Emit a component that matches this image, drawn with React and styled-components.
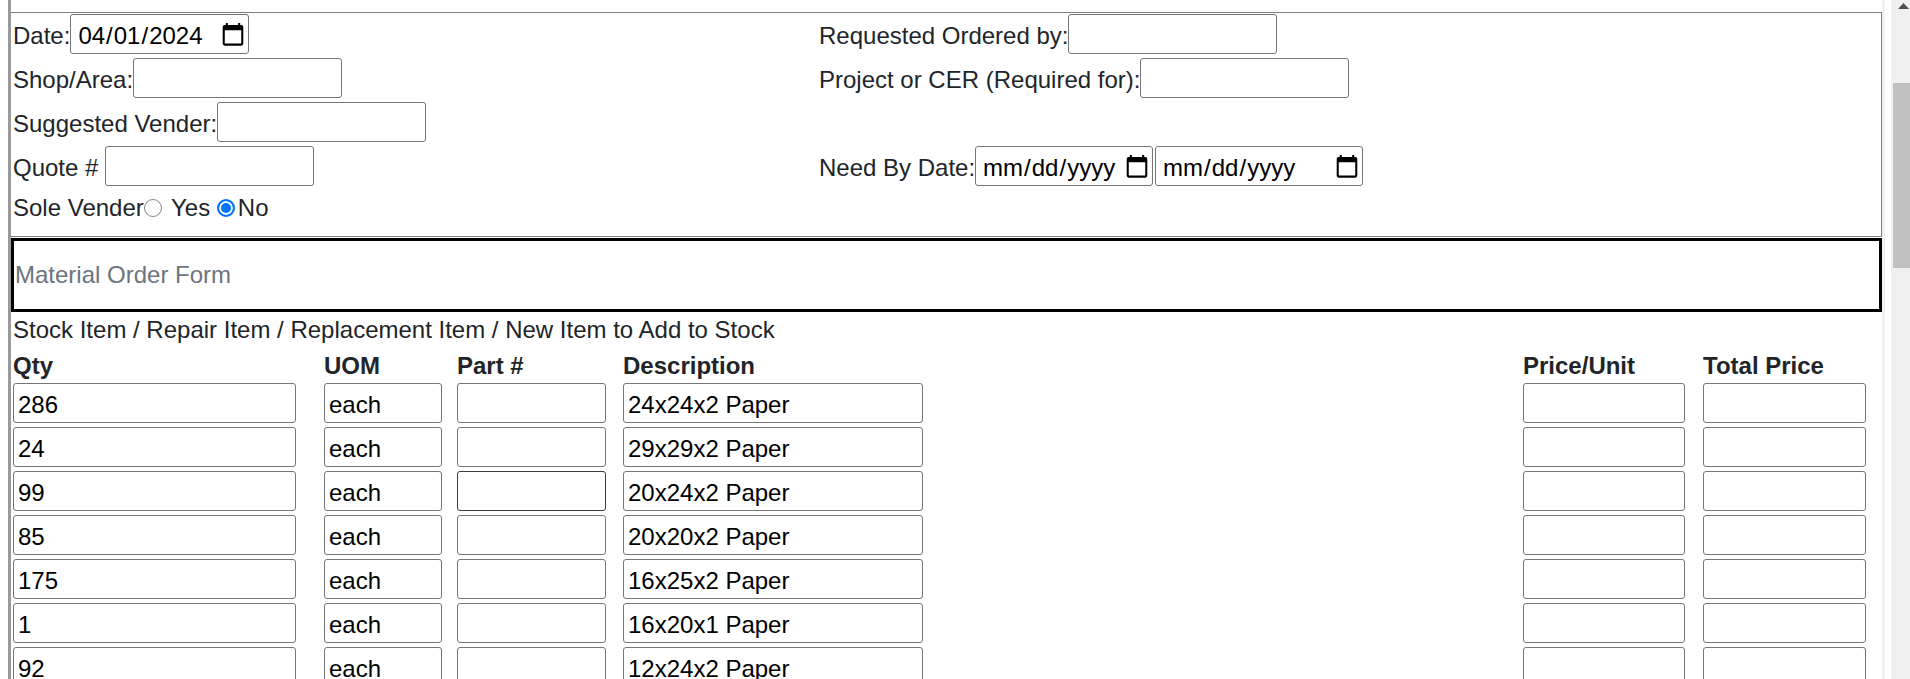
import React from "react";
import styled, { createGlobalStyle } from "styled-components";

const items = [
  { qty: "286", uom: "each", part: "", desc: "24x24x2 Paper" },
  { qty: "24", uom: "each", part: "", desc: "29x29x2 Paper" },
  { qty: "99", uom: "each", part: "", desc: "20x24x2 Paper", hover: true },
  { qty: "85", uom: "each", part: "", desc: "20x20x2 Paper" },
  { qty: "175", uom: "each", part: "", desc: "16x25x2 Paper" },
  { qty: "1", uom: "each", part: "", desc: "16x20x1 Paper" },
  { qty: "92", uom: "each", part: "", desc: "12x24x2 Paper" },
  { qty: "40", uom: "each", part: "", desc: "20x25x2 Paper" },
];

const GlobalStyle = createGlobalStyle`
  html, body {
    margin: 0;
    padding: 0;
    height: 679px;
    overflow: hidden;
    background: #fff;
  }
  body {
    font-family: "Liberation Sans", Arial, sans-serif;
    font-size: 24px;
    line-height: 1.5;
    color: #212529;
  }
  * {
    box-sizing: border-box;
  }
`;

const Screen = styled.div`
  display: flex;
  height: 679px;
`;

const Page = styled.div`
  flex: 1;
  margin: 0 6px 0 8px;
  padding-top: 12px;
  border-left: 3px solid #9a9a9a;
  border-right: 3px solid #f0f0f0;
  overflow: hidden;
`;

const InfoSection = styled.section`
  display: grid;
  grid-template-columns: 806px 1fr;
  padding: 0 0 7px 2px;
  border: 1px solid #808080;
  border-left: none;
`;

const Row = styled.div`
  display: flex;
  align-items: baseline;
  padding: 1px 0 3px;
  white-space: nowrap;
`;

const Input = styled.input`
  width: ${(p) => p.$w || 209}px;
  height: 40px;
  margin: 0;
  padding: 4px 4px 0;
  border: 1px solid ${(p) => (p.$hover ? "#3c3c3c" : "#767676")};
  border-radius: 3px;
  background: #fff;
  color: #000;
  font-family: inherit;
  font-size: 24px;
  line-height: normal;
  outline: none;

  &[type="date"] {
    padding: 4px 5px 0 6px;
  }
  &[type="date"]::-webkit-calendar-picker-indicator {
    width: 20px;
    height: 20px;
    margin: 0 0 3px 0;
    padding: 0;
    transform: scale(1.3);
  }
`;

const RadioGroup = styled.span`
  display: inline;
`;

const Radio = styled.input.attrs({ type: "radio" })`
  appearance: none;
  display: inline-block;
  width: 18px;
  height: 18px;
  margin: 0 3px 0 0;
  border: 1px solid #858585;
  border-radius: 50%;
  background: #fff;
  vertical-align: -1px;

  &:checked {
    border: 2px solid #0075ff;
    background: #0075ff;
    box-shadow: inset 0 0 0 2px #fff;
  }
`;

const TitleBox = styled.div`
  display: flex;
  align-items: center;
  height: 74px;
  margin-top: 1px;
  padding-left: 1px;
  border: 3px solid #000;
  color: #6c757d;
`;

const ItemTypes = styled.div`
  padding-left: 2px;
  line-height: 36px;
`;

const columns = `
  display: grid;
  grid-template-columns: 311px 133px 166px 900px 180px 163px;
  padding-left: 2px;
`;

const HeadRow = styled.div`
  ${columns}
  font-weight: 700;
  line-height: 35px;
`;

const ItemList = styled.div`
  ${columns}
  row-gap: 4px;
`;

const ScrollTrack = styled.div`
  flex: none;
  width: 19px;
  overflow: hidden;
  background: #f0f0f0;
`;

const ScrollInner = styled.div`
  display: flex;
  flex-direction: column;
  align-items: center;
  width: 25px;
`;

const ScrollArrow = styled.div`
  display: flex;
  justify-content: center;
  height: 19px;
  padding-top: 3px;
`;

const ScrollThumb = styled.div`
  width: 21px;
  height: 185px;
  margin-top: 64px;
  background: #c1c1c1;
`;

export default function App() {
  return (
    <>
      <GlobalStyle />
      <Screen>
        <Page>
          <InfoSection>
            <Row>
              Date:<Input type="date" $w={179} defaultValue="2024-04-01" />
            </Row>
            <Row>
              Requested Ordered by:<Input type="text" />
            </Row>
            <Row>
              Shop/Area:<Input type="text" />
            </Row>
            <Row>
              Project or CER (Required for):<Input type="text" />
            </Row>
            <Row>
              Suggested Vender:<Input type="text" />
            </Row>
            <Row />
            <Row>
              Quote #&nbsp;<Input type="text" />
            </Row>
            <Row>
              Need By Date:<Input type="date" $w={178} />
              <Input type="date" $w={208} style={{ marginLeft: 2 }} />
            </Row>
            <Row>
              <RadioGroup>
                Sole Vender<Radio name="sole" /> Yes <Radio name="sole" defaultChecked />No
              </RadioGroup>
            </Row>
            <Row />
          </InfoSection>

          <TitleBox>Material Order Form</TitleBox>

          <ItemTypes>Stock Item / Repair Item / Replacement Item / New Item to Add to Stock</ItemTypes>

          <HeadRow>
            <span>Qty</span>
            <span>UOM</span>
            <span>Part #</span>
            <span>Description</span>
            <span>Price/Unit</span>
            <span>Total Price</span>
          </HeadRow>

          <ItemList>
            {items.map((item, i) => (
              <React.Fragment key={i}>
                <Input type="text" $w={283} defaultValue={item.qty} />
                <Input type="text" $w={118} defaultValue={item.uom} />
                <Input type="text" $w={149} $hover={item.hover} defaultValue={item.part} />
                <Input type="text" $w={300} defaultValue={item.desc} />
                <Input type="text" $w={162} />
                <Input type="text" $w={163} />
              </React.Fragment>
            ))}
          </ItemList>
        </Page>

        <ScrollTrack>
          <ScrollInner>
            <ScrollArrow>
              <svg width="11" height="6" viewBox="0 0 11 6">
                <path d="M5.5 0 L11 6 L0 6 Z" fill="#505050" />
              </svg>
            </ScrollArrow>
            <ScrollThumb />
          </ScrollInner>
        </ScrollTrack>
      </Screen>
    </>
  );
}
